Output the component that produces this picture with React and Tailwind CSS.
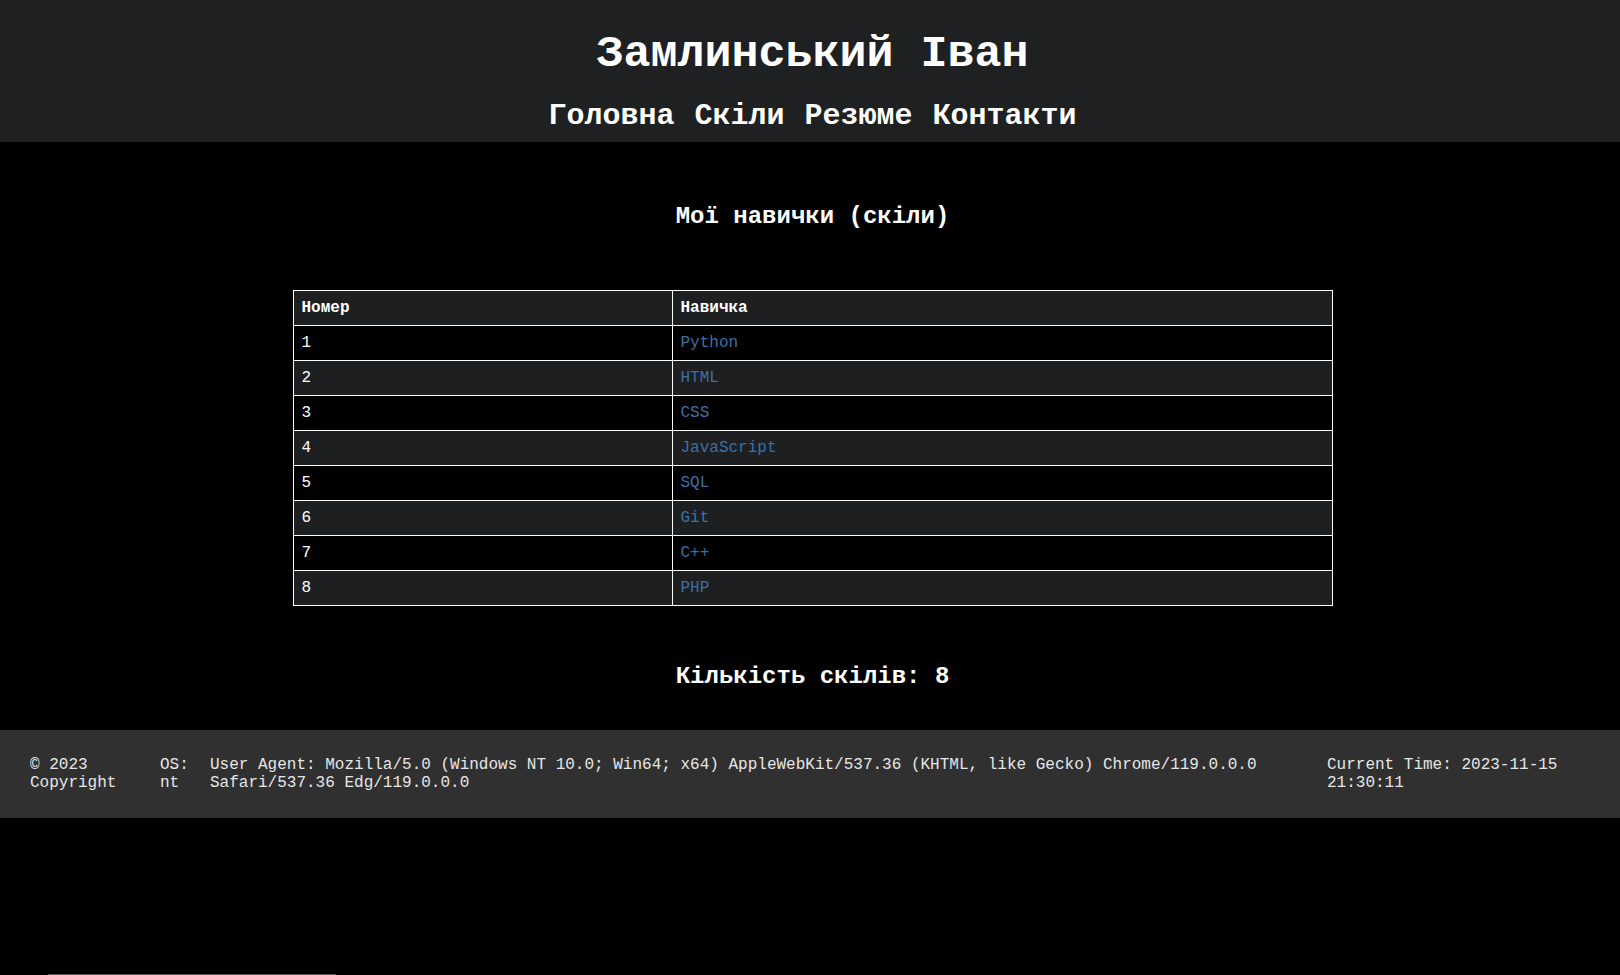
import React from 'react';

const skills = ['Python', 'HTML', 'CSS', 'JavaScript', 'SQL', 'Git', 'C++', 'PHP'];

const mono = { fontFamily: '"Liberation Mono", "Courier New", monospace' };

const App = () => {
  return (
    <div className="min-h-screen bg-black text-white" style={mono}>
      <header className="flex flex-col items-center bg-[#1f2022] pt-[29px] pb-[9px] pl-[5px]">
        <h1 className="text-[45px] font-bold leading-[51px]">Замлинський Іван</h1>
        <nav className="mt-[19px] flex gap-[20px] text-[30px] font-bold leading-[34px]">
          <a href="#" className="text-white">Головна</a>
          <a href="#" className="text-white">Скіли</a>
          <a href="#" className="text-white">Резюме</a>
          <a href="#" className="text-white">Контакти</a>
        </nav>
      </header>

      <main className="flex flex-col items-center pl-[5px] pt-[61px] pb-[40px]">
        <h2 className="text-[24px] font-bold leading-[27px]">Мої навички (скіли)</h2>

        <table className="mt-[60px] w-[1040px] border-collapse text-[16px] leading-[18px]">
          <thead>
            <tr className="bg-[#1e1f21]">
              <th className="w-[379px] border border-white px-[8px] py-[8px] text-left font-bold">Номер</th>
              <th className="border border-white px-[8px] py-[8px] text-left font-bold">Навичка</th>
            </tr>
          </thead>
          <tbody>
            {skills.map((skill, i) => (
              <tr key={skill} className={i % 2 === 0 ? 'bg-black' : 'bg-[#1e1f21]'}>
                <td className="border border-white px-[8px] py-[8px]">{i + 1}</td>
                <td className="border border-white px-[8px] py-[8px]">
                  <a href="#" className="text-[#3d6fa6]">{skill}</a>
                </td>
              </tr>
            ))}
          </tbody>
        </table>

        <p className="mt-[57px] text-[24px] font-bold leading-[27px]">Кількість скілів: {skills.length}</p>
      </main>

      <footer className="flex bg-[#303030] px-[30px] py-[26px] text-[16px] leading-[18px] text-[#e6e6e6]">
        <div className="w-[130px]">© 2023 Copyright</div>
        <div className="w-[50px]">OS: nt</div>
        <div className="w-[1117px]">
          User Agent: Mozilla/5.0 (Windows NT 10.0; Win64; x64) AppleWebKit/537.36 (KHTML, like Gecko) Chrome/119.0.0.0 Safari/537.36 Edg/119.0.0.0
        </div>
        <div className="w-[240px]">Current Time: 2023-11-15 21:30:11</div>
      </footer>

      <div className="ml-[48px] mt-[156px] h-[1px] w-[288px] bg-[#5a5a5a]" />
    </div>
  );
};

export default App;
